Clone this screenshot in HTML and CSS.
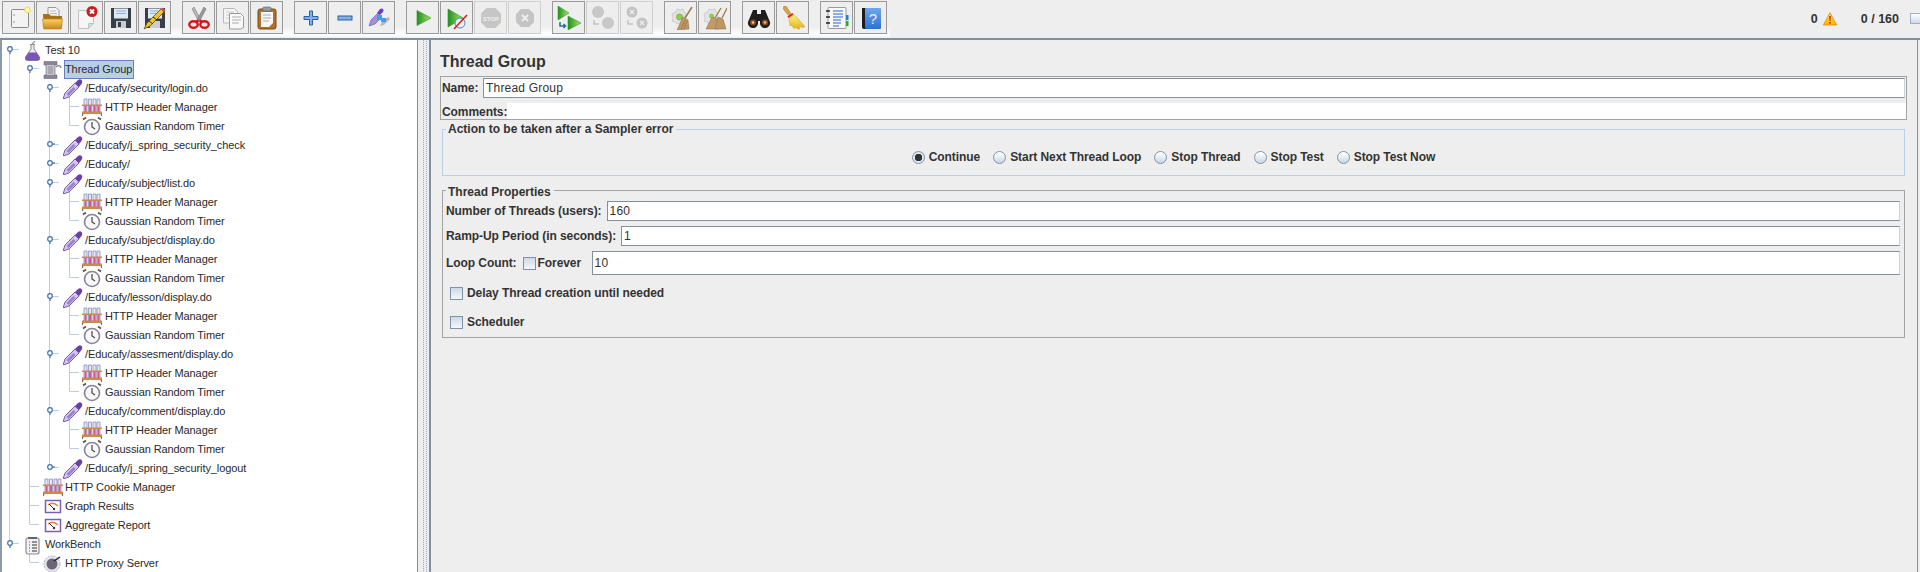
FILE: index.html
```html
<!DOCTYPE html>
<html lang="en">
<head>
<meta charset="utf-8">
<title>Apache JMeter - Thread Group</title>
<link rel="stylesheet" href="styles.css">
</head>
<body>
<svg class="defs" aria-hidden="true">
  <defs>
    <linearGradient id="gFolder" x1="0" y1="0" x2="0" y2="1"><stop offset="0" stop-color="#f8cf6a"/><stop offset="1" stop-color="#c98a17"/></linearGradient>
    <linearGradient id="gGreen" x1="0" y1="0" x2="1" y2="0"><stop offset="0" stop-color="#1f8f1f"/><stop offset="1" stop-color="#a9e66a"/></linearGradient>
    <linearGradient id="gBook" x1="0" y1="0" x2="0" y2="1"><stop offset="0" stop-color="#6fa8ee"/><stop offset="1" stop-color="#2f6fd0"/></linearGradient>
    <linearGradient id="gBroom" x1="0" y1="0" x2="0" y2="1"><stop offset="0" stop-color="#fff27a"/><stop offset="1" stop-color="#e0b21a"/></linearGradient>
    <linearGradient id="gWarn" x1="0" y1="0" x2="0" y2="1"><stop offset="0" stop-color="#ffe25a"/><stop offset="1" stop-color="#ffb300"/></linearGradient>

    <symbol id="i-new" viewBox="0 0 24 24"><rect x="4.500" y="3.500" width="17" height="18" rx="1" fill="#f3f3f3" stroke="#8a8a8a"/><circle cx="7" cy="9" r=".8" fill="#888"/><circle cx="7" cy="16" r=".8" fill="#888"/><circle cx="20.500" cy="4" r="2.800" fill="#fff6a8" stroke="#e9d85a"/></symbol>
    <symbol id="i-open" viewBox="0 0 24 24"><path d="M7 1.500h8l3 3v9H7z" fill="#f4f4f4" stroke="#999"/><path d="M9 5h6M9 7.500h7M9 10h7" stroke="#bbb"/><path d="M2 8h6l2 2h11v11.500q0 1-1 1H4q-1 0-1.300-1z" fill="#a87212"/><path d="M1.500 13h20l-1 9q0 1-1 1H3.500q-1 0-1-1z" fill="url(#gFolder)" stroke="#b67f17" stroke-width=".6"/></symbol>
    <symbol id="i-close" viewBox="0 0 24 24"><path d="M3.500 4.500h15v13l-5 5h-10z" fill="#f6f6f6" stroke="#c2c2c2"/><path d="M18.500 17.500h-5v5z" fill="#ddd" stroke="#c2c2c2"/><circle cx="17" cy="5.500" r="5.500" fill="#c9201f"/><path d="M15 3.500l4 4M19 3.500l-4 4" stroke="#fff" stroke-width="1.800"/></symbol>
    <symbol id="i-save" viewBox="0 0 24 24"><path d="M2 2h20v20H2z" fill="#3a3f45"/><rect x="5" y="2.500" width="14" height="10" fill="#dfe9f5"/><path d="M7 5h10M7 7.500h10" stroke="#8fb2d8"/><rect x="7" y="15" width="10" height="7" fill="#c9ccd0"/><rect x="9" y="16" width="3" height="5" fill="#3a3f45"/></symbol>
    <symbol id="i-saveas" viewBox="0 0 24 24"><path d="M2 2h20v20H2z" fill="#3a3f45"/><rect x="5" y="2.500" width="14" height="10" fill="#dfe9f5"/><path d="M7 5h8M7 7.500h6" stroke="#8fb2d8"/><rect x="7" y="15" width="10" height="7" fill="#c9ccd0"/><path d="M1 23l3-6L18 3l3 3L7 20z" fill="#f0c52c" stroke="#4a3a10" stroke-width=".7"/><path d="M6 15l4 3M10 11l4 3" stroke="#333"/><path d="M18 3l3 3 1.500-1.500-3-3z" fill="#d9534f"/></symbol>
    <symbol id="i-cut" viewBox="0 0 24 24"><path d="M7 1l7 13-2 2L5 3z" fill="#b6b6b6" stroke="#808080" stroke-width=".6"/><path d="M17 1l-7 13 2 2 7-13z" fill="#9a9a9a" stroke="#707070" stroke-width=".6"/><ellipse cx="6.500" cy="18.500" rx="4.200" ry="3.300" fill="none" stroke="#d01818" stroke-width="2.400"/><ellipse cx="17.500" cy="18.500" rx="4.200" ry="3.300" fill="none" stroke="#d01818" stroke-width="2.400"/><path d="M9 15.500l2.500-1M15 15.500l-2.500-1" stroke="#d01818" stroke-width="2"/></symbol>
    <symbol id="i-copy" viewBox="0 0 24 24"><path d="M2.500 2.500h11l3 3V17h-14z" fill="#f4f4f4" stroke="#b8b8b8"/><path d="M5 6h8M5 9h8M5 12h8" stroke="#ccc"/><path d="M8.500 7.500h11l3 3v11l-3 1.500h-11z" fill="#fafafa" stroke="#9a9a9a"/><path d="M11 11h9M11 14h9M11 17h7" stroke="#aaa"/></symbol>
    <symbol id="i-paste" viewBox="0 0 24 24"><rect x="3" y="3" width="18" height="20" rx="2" fill="#b2702a" stroke="#7b4a18"/><path d="M6 6h12v11l-4 4H6z" fill="#f8f8f8"/><path d="M8 9h8M8 12h8M8 15h6" stroke="#aaa"/><rect x="8" y="1" width="8" height="4" rx="1" fill="#9b9b9b" stroke="#666" stroke-width=".6"/></symbol>
    <symbol id="i-plus" viewBox="0 0 24 24"><path d="M10.500 5h3v5.500H19v3h-5.500V19h-3v-5.500H5v-3h5.500z" fill="#7fb0e8" stroke="#2f5f9f"/></symbol>
    <symbol id="i-minus" viewBox="0 0 24 24"><rect x="5" y="10" width="14" height="4" fill="#7fb0e8" stroke="#2f5f9f"/></symbol>
    <symbol id="i-toggle" viewBox="0 0 24 24"><path d="M2 20l2-6 7-7 4 4-7 7z" fill="#a38ed8" stroke="#7a5ec0" stroke-width=".7"/><path d="M10 7l3-4q2-1 3 0t0 3l-3 3z" fill="#6a3fc0"/><path d="M13 20l2-4 6-5 2 2-6 6z" fill="#b5b5b5"/><path d="M10 9h5v5h-5zM14 12h5v4h-5z" fill="#38a0ee"/></symbol>
    <symbol id="i-start" viewBox="0 0 24 24"><path d="M6 4.500L20 12 6 19.500z" fill="url(#gGreen)" stroke="#3f9a30" stroke-width=".7"/></symbol>
    <symbol id="i-startno" viewBox="0 0 24 24"><path d="M3 3l15 9-15 9z" fill="url(#gGreen)" stroke="#3f9a30" stroke-width=".7"/><circle cx="15" cy="17" r="5" fill="#e8f0f8" stroke="#5b86b5"/><path d="M9 23L22 9" stroke="#d81818" stroke-width="1.500"/></symbol>
    <symbol id="i-stop" viewBox="0 0 24 24"><path d="M7.500 2h9L22 7.500v9L16.500 22h-9L2 16.500v-9z" fill="#c6c6c6"/><text x="12" y="14.500" class="stoptext">STOP</text></symbol>
    <symbol id="i-shut" viewBox="0 0 24 24"><path d="M8 3h8l5 5v8l-5 5H8l-5-5V8z" fill="#c4c4c4"/><path d="M9 9l6 6M15 9l-6 6" stroke="#eee" stroke-width="2"/></symbol>
    <symbol id="i-rstart" viewBox="0 0 24 24"><path d="M1 0l11 7-11 7z" fill="url(#gGreen)" stroke="#3f9a30" stroke-width=".6"/><path d="M11 10l13 7-13 7z" fill="url(#gGreen)" stroke="#3f9a30" stroke-width=".6"/><path d="M3 16v4h5M6.500 18l2 2-2 2" fill="none" stroke="#1f6f8f" stroke-width="1.500"/></symbol>
    <symbol id="i-rstop" viewBox="0 0 24 24"><circle cx="7" cy="6" r="6" fill="#c8c8c8"/><circle cx="17" cy="17" r="6" fill="#c8c8c8"/><path d="M3 14v4h5" fill="none" stroke="#c4c4c4" stroke-width="1.500"/></symbol>
    <symbol id="i-rshut" viewBox="0 0 24 24"><circle cx="7" cy="6" r="5.500" fill="#c4c4c4"/><circle cx="17" cy="17" r="5.500" fill="#c4c4c4"/><path d="M3 14v4h5" fill="none" stroke="#c4c4c4" stroke-width="1.500"/><path d="M5 4l4 4M9 4l-4 4M15 15l4 4M19 15l-4 4" stroke="#eee" stroke-width="1.300"/></symbol>
    <symbol id="i-clear" viewBox="0 0 24 24"><path d="M4 7l3-1 1-3 3 1 3-1 1 3 2 1-1 3 1 3-2 2-1 3-3-1-3 1-2-2-3-1 1-3-1-3z" fill="#e2e2e2" stroke="#bbb" stroke-width=".6"/><circle cx="10.500" cy="11" r="3" fill="#8fd04a" stroke="#5f9f2a" stroke-width=".6"/><path d="M23 1l-7 11" stroke="#a07a45" stroke-width="1.500"/><path d="M14 11l5 3 1 9-12 1z" fill="#bf9765" stroke="#8a6a3e" stroke-width=".5"/><path d="M12 23l4-9M15 23l3-8" stroke="#8a6a3e" stroke-width=".6"/></symbol>
    <symbol id="i-clearall" viewBox="0 0 24 24"><path d="M2 7l3-1 1-3 3 1 3-1 1 3 2 1-1 3 1 3-2 2-1 3-3-1-3 1-2-2-3-1 1-3-1-3z" fill="#e4e4e4" stroke="#bbb" stroke-width=".6"/><circle cx="8.500" cy="10" r="2.500" fill="#8fd04a"/><path d="M18 2l-6 10M24 2l-5 10" stroke="#a07a45" stroke-width="1.300"/><path d="M9 11l5 2 2 10H3z" fill="#c29a68" stroke="#8a6a3e" stroke-width=".5"/><path d="M15 11l5 2 3 10H12z" fill="#bf9765" stroke="#8a6a3e" stroke-width=".5"/></symbol>
    <symbol id="i-bino" viewBox="0 0 24 24"><path d="M6 4h4v4h4V4h4l5 12a5 5 0 0 1-10 2v-3h-2v3a5 5 0 0 1-10-2z" fill="#1e1e1e"/><circle cx="6" cy="16.500" r="3" fill="#8a4a1a"/><circle cx="18" cy="16.500" r="3" fill="#8a4a1a"/><circle cx="6" cy="16.500" r="1.300" fill="#e9c08a"/><circle cx="18" cy="16.500" r="1.300" fill="#e9c08a"/></symbol>
    <symbol id="i-broom" viewBox="0 0 24 24"><path d="M3 0q3 0 4 3l3 5-2.500 1.500L3 4q-1.500-2 0-4z" fill="#d6a24a" stroke="#a77a2a" stroke-width=".5"/><path d="M6.500 10.500l5-3.500 1 1.500-5 3.500z" fill="#d81f26"/><path d="M8 12.500l5-4 11 12-2 1-3-1-1 3-3-2-2 1-2-3-2 0z" fill="url(#gBroom)" stroke="#c59a18" stroke-width=".5"/></symbol>
    <symbol id="i-func" viewBox="0 0 24 24"><rect x="3" y="1.500" width="18" height="21" rx="1" fill="#f8f8f8" stroke="#9a9a9a"/><path d="M1 5h4M1 11h4M1 17h4" stroke="#222" stroke-width="1.500"/><path d="M8 5h10M8 8h10M8 11h10M8 14h8M8 17h8M8 20h6" stroke="#2a63c8" stroke-width="1.200"/><rect x="21" y="9" width="2.500" height="5" fill="#2a7ad0"/><rect x="21" y="15" width="2.500" height="5" fill="#2ea82e"/></symbol>
    <symbol id="i-help" viewBox="0 0 24 24"><path d="M3 2h4v21H5q-2 0-2-2z" fill="#1d1d1d"/><rect x="6" y="2" width="16" height="21" rx="1" fill="url(#gBook)"/><text x="14" y="18" class="helptext">?</text></symbol>

    <symbol id="t-flask" viewBox="0 0 20 20"><path d="M7 3.500h5M8 3.500V8L2.500 16q-1 3.500 2 3.500h10q3 0 2-3.500L11 8V3.500" fill="#eceaf2" stroke="#8c8c8c"/><path d="M5.500 11.500h8l3 5q.5 3-2 3h-10q-2.500 0-2-3z" fill="#7a55b8"/><path d="M9 3l3-3" stroke="#999" stroke-width="1.200"/></symbol>
    <symbol id="t-spool" viewBox="0 0 20 20"><path d="M1 1.500h13V5h-2v10h2v3.500H1V15h2V5H1z" fill="#8b8396" stroke="#6e6878" stroke-width=".6"/><path d="M3.500 5h8v10h-8z" fill="#c9c4cf"/><path d="M5 7h5M5 9h5M5 11h5M5 13h5" stroke="#8f8a98"/><path d="M13 7q4-3 5 1" fill="none" stroke="#8b8396" stroke-width="1.300"/></symbol>
    <symbol id="t-pipette" viewBox="0 0 20 20"><path d="M0 20l2-6L12 4l4 4L6 18z" fill="#d3c6ec" stroke="#6a4ea5" stroke-width=".9"/><path d="M3.500 15l7-7 2 2-7 7z" fill="#9a80cf"/><path d="M12 4l4 4 2.500-3q1.500-2.500 0-4t-4 .5z" fill="#6a3fa8"/></symbol>
    <symbol id="t-rack" viewBox="0 0 20 20"><path d="M2 1h3v13q-1.500 2-3 0zM6.500 1h3v13q-1.500 2-3 0zM11 1h3v13q-1.500 2-3 0zM15 1h3v13q-1.500 2-3 0z" fill="#e4e6f4" stroke="#7884b8" stroke-width=".7"/><path d="M2.500 8h2v6h-2zM7 8h2v6H7zM11.500 8h2v6h-2zM15.500 8h2v6h-2z" fill="#d8588a"/><path d="M0 6.500h20V8H0zM0 13.500h20V16H0z" fill="#c98a4a"/><path d="M1 16l-1 2M19 16l1 2" stroke="#8a5a28" stroke-width="1.300"/></symbol>
    <symbol id="t-clock" viewBox="0 0 20 20"><circle cx="10" cy="10" r="7.500" fill="#f8f8f8" stroke="#8a8298" stroke-width="1.600"/><path d="M10 5v5l3 2" fill="none" stroke="#444" stroke-width="1.200"/><path d="M1 2.500l3-2M19 2.500l-3-2" stroke="#555" stroke-width="1.800"/></symbol>
    <symbol id="t-graph" viewBox="0 0 20 20"><rect x="2.500" y="3.500" width="15" height="12" fill="#fff" stroke="#7c5fb0" stroke-width="1.500"/><path d="M5 8q5-4 10 1" fill="none" stroke="#e8803a" stroke-width="1.400"/><path d="M6 7l5 5" stroke="#333"/><circle cx="11" cy="12" r="1.200" fill="#333"/></symbol>
    <symbol id="t-bench" viewBox="0 0 20 20"><rect x="3" y="3" width="13" height="16" rx="2" fill="#f2f0f4" stroke="#8f8a98" stroke-width="1.200"/><path d="M5 2h9v2H5z" fill="#666"/><path d="M9 7h5M9 10h5M9 13h5M9 16h5" stroke="#333"/><path d="M6 7h1M6 10h1M6 13h1" stroke="#4a4a4a"/><path d="M6 16h1" stroke="#3a9a3a"/></symbol>
    <symbol id="t-proxy" viewBox="0 0 20 20"><circle cx="9" cy="10" r="8" fill="#e8e4ee" stroke="#b9b3c4" stroke-dasharray="2 1"/><circle cx="9" cy="10" r="5.500" fill="#6b6578"/><path d="M11 7l6-4" stroke="#222" stroke-width="1.500"/></symbol>

    <symbol id="h-open" viewBox="0 0 10 10"><path d="M5 7v3" stroke="#3f6fb0" stroke-width="1.200"/><circle cx="5" cy="5" r="2.300" fill="#fff" stroke="#3f6fb0" stroke-width="1.200"/></symbol>
    <symbol id="h-closed" viewBox="0 0 10 10"><path d="M7 5h3" stroke="#3f6fb0" stroke-width="1.200"/><circle cx="5" cy="5" r="2.300" fill="#fff" stroke="#3f6fb0" stroke-width="1.200"/></symbol>
  </defs>
</svg>

<header class="topbar">
  <nav class="toolbar">
    <div class="tool-group">
      <button class="tool" type="button"><svg class="tool-icon"><use href="#i-new"/></svg></button>
      <button class="tool" type="button"><svg class="tool-icon"><use href="#i-open"/></svg></button>
      <button class="tool" type="button"><svg class="tool-icon"><use href="#i-close"/></svg></button>
      <button class="tool" type="button"><svg class="tool-icon"><use href="#i-save"/></svg></button>
      <button class="tool" type="button"><svg class="tool-icon"><use href="#i-saveas"/></svg></button>
    </div>
    <div class="tool-group">
      <button class="tool" type="button"><svg class="tool-icon"><use href="#i-cut"/></svg></button>
      <button class="tool" type="button"><svg class="tool-icon"><use href="#i-copy"/></svg></button>
      <button class="tool" type="button"><svg class="tool-icon"><use href="#i-paste"/></svg></button>
    </div>
    <div class="tool-group">
      <button class="tool" type="button"><svg class="tool-icon"><use href="#i-plus"/></svg></button>
      <button class="tool" type="button"><svg class="tool-icon"><use href="#i-minus"/></svg></button>
      <button class="tool" type="button"><svg class="tool-icon"><use href="#i-toggle"/></svg></button>
    </div>
    <div class="tool-group">
      <button class="tool" type="button"><svg class="tool-icon"><use href="#i-start"/></svg></button>
      <button class="tool" type="button"><svg class="tool-icon"><use href="#i-startno"/></svg></button>
      <button class="tool off" type="button"><svg class="tool-icon"><use href="#i-stop"/></svg></button>
      <button class="tool off" type="button"><svg class="tool-icon"><use href="#i-shut"/></svg></button>
    </div>
    <div class="tool-group">
      <button class="tool" type="button"><svg class="tool-icon"><use href="#i-rstart"/></svg></button>
      <button class="tool off" type="button"><svg class="tool-icon"><use href="#i-rstop"/></svg></button>
      <button class="tool off" type="button"><svg class="tool-icon"><use href="#i-rshut"/></svg></button>
    </div>
    <div class="tool-group">
      <button class="tool" type="button"><svg class="tool-icon"><use href="#i-clear"/></svg></button>
      <button class="tool" type="button"><svg class="tool-icon"><use href="#i-clearall"/></svg></button>
    </div>
    <div class="tool-group">
      <button class="tool" type="button"><svg class="tool-icon"><use href="#i-bino"/></svg></button>
      <button class="tool" type="button"><svg class="tool-icon"><use href="#i-broom"/></svg></button>
    </div>
    <div class="tool-group">
      <button class="tool" type="button"><svg class="tool-icon"><use href="#i-func"/></svg></button>
      <button class="tool" type="button"><svg class="tool-icon"><use href="#i-help"/></svg></button>
    </div>
  </nav>
  <div class="status">
    <span class="status-errors">0</span>
    <svg class="warn" viewBox="0 0 14 14"><path d="M7 .7L13.600 13H.4z" fill="url(#gWarn)" stroke="#e08a00" stroke-width=".8"/><path d="M6.200 4h1.600l-.3 5h-1zM6.200 10h1.600v1.600H6.200z" fill="#b3261e"/></svg>
    <span class="status-count">0 / 160</span>
    <span class="status-box"></span>
  </div>
</header>

<main class="workspace">
  <aside class="tree">
    <svg class="tree-lines" viewBox="0 0 100 532">
      <path class="tree-path" d="M9.500 9.500V503.500M29.500 28.500V484.500M29.500 503.500V522.500M49.500 47.500V427.500M10 9.500H19M10 503.500H19M30 28.500H39M30 446.500H39M30 465.500H39M30 484.500H39M30 522.500H39M50 47.500H59M50 104.500H59M50 123.500H59M50 142.500H59M50 199.500H59M50 256.500H59M50 313.500H59M50 370.500H59M50 427.500H59M69.500 47.500V85.500H79M69.500 66.500H79M69.500 142.500V180.500H79M69.500 161.500H79M69.500 199.500V237.500H79M69.500 218.500H79M69.500 256.500V294.500H79M69.500 275.500H79M69.500 313.500V351.500H79M69.500 332.500H79M69.500 370.500V408.500H79M69.500 389.500H79"/>
      <use href="#h-open" x="5" y="4" width="10" height="10"/>
      <use href="#h-open" x="25" y="23" width="10" height="10"/>
      <use href="#h-open" x="45" y="42" width="10" height="10"/>
      <use href="#h-closed" x="45" y="99" width="10" height="10"/>
      <use href="#h-closed" x="45" y="118" width="10" height="10"/>
      <use href="#h-open" x="45" y="137" width="10" height="10"/>
      <use href="#h-open" x="45" y="194" width="10" height="10"/>
      <use href="#h-open" x="45" y="251" width="10" height="10"/>
      <use href="#h-open" x="45" y="308" width="10" height="10"/>
      <use href="#h-open" x="45" y="365" width="10" height="10"/>
      <use href="#h-closed" x="45" y="422" width="10" height="10"/>
      <use href="#h-open" x="5" y="498" width="10" height="10"/>
    </svg>
    <ul class="tree-list">
      <li class="node l0"><svg class="node-icon"><use href="#t-flask"/></svg><span class="node-label">Test 10</span></li>
      <li class="node l1"><svg class="node-icon"><use href="#t-spool"/></svg><span class="node-label selected">Thread Group</span></li>
      <li class="node l2"><svg class="node-icon"><use href="#t-pipette"/></svg><span class="node-label">/Educafy/security/login.do</span></li>
      <li class="node l3"><svg class="node-icon"><use href="#t-rack"/></svg><span class="node-label">HTTP Header Manager</span></li>
      <li class="node l3"><svg class="node-icon"><use href="#t-clock"/></svg><span class="node-label">Gaussian Random Timer</span></li>
      <li class="node l2"><svg class="node-icon"><use href="#t-pipette"/></svg><span class="node-label">/Educafy/j_spring_security_check</span></li>
      <li class="node l2"><svg class="node-icon"><use href="#t-pipette"/></svg><span class="node-label">/Educafy/</span></li>
      <li class="node l2"><svg class="node-icon"><use href="#t-pipette"/></svg><span class="node-label">/Educafy/subject/list.do</span></li>
      <li class="node l3"><svg class="node-icon"><use href="#t-rack"/></svg><span class="node-label">HTTP Header Manager</span></li>
      <li class="node l3"><svg class="node-icon"><use href="#t-clock"/></svg><span class="node-label">Gaussian Random Timer</span></li>
      <li class="node l2"><svg class="node-icon"><use href="#t-pipette"/></svg><span class="node-label">/Educafy/subject/display.do</span></li>
      <li class="node l3"><svg class="node-icon"><use href="#t-rack"/></svg><span class="node-label">HTTP Header Manager</span></li>
      <li class="node l3"><svg class="node-icon"><use href="#t-clock"/></svg><span class="node-label">Gaussian Random Timer</span></li>
      <li class="node l2"><svg class="node-icon"><use href="#t-pipette"/></svg><span class="node-label">/Educafy/lesson/display.do</span></li>
      <li class="node l3"><svg class="node-icon"><use href="#t-rack"/></svg><span class="node-label">HTTP Header Manager</span></li>
      <li class="node l3"><svg class="node-icon"><use href="#t-clock"/></svg><span class="node-label">Gaussian Random Timer</span></li>
      <li class="node l2"><svg class="node-icon"><use href="#t-pipette"/></svg><span class="node-label">/Educafy/assesment/display.do</span></li>
      <li class="node l3"><svg class="node-icon"><use href="#t-rack"/></svg><span class="node-label">HTTP Header Manager</span></li>
      <li class="node l3"><svg class="node-icon"><use href="#t-clock"/></svg><span class="node-label">Gaussian Random Timer</span></li>
      <li class="node l2"><svg class="node-icon"><use href="#t-pipette"/></svg><span class="node-label">/Educafy/comment/display.do</span></li>
      <li class="node l3"><svg class="node-icon"><use href="#t-rack"/></svg><span class="node-label">HTTP Header Manager</span></li>
      <li class="node l3"><svg class="node-icon"><use href="#t-clock"/></svg><span class="node-label">Gaussian Random Timer</span></li>
      <li class="node l2"><svg class="node-icon"><use href="#t-pipette"/></svg><span class="node-label">/Educafy/j_spring_security_logout</span></li>
      <li class="node l1"><svg class="node-icon"><use href="#t-rack"/></svg><span class="node-label">HTTP Cookie Manager</span></li>
      <li class="node l1"><svg class="node-icon"><use href="#t-graph"/></svg><span class="node-label">Graph Results</span></li>
      <li class="node l1"><svg class="node-icon"><use href="#t-graph"/></svg><span class="node-label">Aggregate Report</span></li>
      <li class="node l0"><svg class="node-icon"><use href="#t-bench"/></svg><span class="node-label">WorkBench</span></li>
      <li class="node l1"><svg class="node-icon"><use href="#t-proxy"/></svg><span class="node-label">HTTP Proxy Server</span></li>
    </ul>
  </aside>
  <div class="splitter"></div>
  <section class="panel">
    <h1 class="panel-title">Thread Group</h1>
    <div class="name-box">
      <div class="name-row">
        <label class="label name-label">Name:</label>
        <div class="field">Thread Group</div>
      </div>
      <div class="comment-row">
        <label class="label comment-label">Comments:</label>
        <div class="comment-area"></div>
      </div>
    </div>
    <fieldset class="group action">
      <legend class="legend">Action to be taken after a Sampler error</legend>
      <div class="radios">
        <label class="choice"><input class="radio on" type="radio" name="err" checked><span class="label">Continue</span></label>
        <label class="choice"><input class="radio" type="radio" name="err"><span class="label">Start Next Thread Loop</span></label>
        <label class="choice"><input class="radio" type="radio" name="err"><span class="label">Stop Thread</span></label>
        <label class="choice"><input class="radio" type="radio" name="err"><span class="label">Stop Test</span></label>
        <label class="choice"><input class="radio" type="radio" name="err"><span class="label">Stop Test Now</span></label>
      </div>
    </fieldset>
    <fieldset class="group props">
      <legend class="legend legend-props">Thread Properties</legend>
      <div class="prop-row">
        <label class="label">Number of Threads (users):</label>
        <div class="field">160</div>
      </div>
      <div class="prop-row">
        <label class="label">Ramp-Up Period (in seconds):</label>
        <div class="field">1</div>
      </div>
      <div class="prop-row loop-row">
        <label class="label">Loop Count:</label>
        <label class="check-label forever"><input class="check" type="checkbox"><span class="label">Forever</span></label>
        <div class="field">10</div>
      </div>
      <label class="check-label option"><input class="check" type="checkbox"><span class="label">Delay Thread creation until needed</span></label>
      <label class="check-label option"><input class="check" type="checkbox"><span class="label">Scheduler</span></label>
    </fieldset>
  </section>
</main>
</body>
</html>
```
FILE: styles.css
```css
* { box-sizing: border-box; }

html, body {
  margin: 0;
  padding: 0;
  width: 1920px;
  height: 572px;
  overflow: hidden;
  background: #eeeeee;
  color: #333333;
  font-family: "Liberation Sans", Arial, sans-serif;
  font-size: 12px;
}

.defs {
  position: absolute;
  width: 0;
  height: 0;
}

.stoptext {
  font: bold 6px "Liberation Sans", sans-serif;
  fill: #eeeeee;
  text-anchor: middle;
}

.helptext {
  font: 15px "Liberation Sans", sans-serif;
  fill: #e8f0ff;
  text-anchor: middle;
}

/* top bar */
.topbar {
  display: flex;
  justify-content: space-between;
  height: 40px;
  border-bottom: 2px solid #7f909f;
}

.toolbar {
  display: flex;
  gap: 11px;
  width: 890px;
  height: 38px;
  padding: 1px 0 0 2px;
  background: linear-gradient(#eeeeee 70%, #ffffff 92%, #eeeeee 100%);
}

.tool-group {
  display: flex;
  gap: 1px;
}

.tool {
  display: flex;
  align-items: center;
  justify-content: center;
  width: 33px;
  height: 33px;
  padding: 0;
  background: #eeeeee;
  border: 1px solid #9a9a9a;
  border-radius: 0;
}

.tool.off {
  border-color: #cfcfcf;
}

.tool-icon {
  width: 24px;
  height: 24px;
}

.status {
  display: flex;
  align-items: center;
  height: 38px;
  font-weight: bold;
  color: #333333;
  font-size: 12.5px;
}

.status-errors {
  margin-right: 5px;
}

.warn {
  width: 14px;
  height: 14px;
  margin-right: 24px;
}

.status-box {
  width: 10px;
  height: 11px;
  margin-left: 11px;
  border: 1px solid #9db0c5;
  border-right: 0;
  background: linear-gradient(#ffffff, #ccd9e8);
  align-self: center;
  margin-top: -1px;
}

/* workspace */
.workspace {
  display: flex;
  height: 532px;
}

.tree {
  position: relative;
  flex: none;
  width: 418px;
  height: 532px;
  padding-top: 1px;
  background: #ffffff;
  border-left: 2px solid #8a9aa8;
  border-right: 1px solid #7f909f;
  overflow: hidden;
}

.tree-lines {
  position: absolute;
  left: -2px;
  top: 0;
  width: 100px;
  height: 532px;
}

.tree-path {
  fill: none;
  stroke: #b8cfe5;
  stroke-width: 1;
}

.tree-list {
  position: relative;
  list-style: none;
  margin: 0;
  padding: 0;
}

.node {
  display: flex;
  align-items: center;
  height: 19px;
  color: #2a2a2a;
  font-size: 11px;
  letter-spacing: -0.1px;
  white-space: nowrap;
}

.l0 { padding-left: 21px; }
.l1 { padding-left: 41px; }
.l2 { padding-left: 61px; }
.l3 { padding-left: 80px; }

.node-icon {
  flex: none;
  width: 20px;
  height: 20px;
  overflow: visible;
}

.node-label {
  margin-left: 1px;
  padding: 0 1px 0 0;
  line-height: 17px;
  border: 1px solid transparent;
}

.l3 .node-label {
  margin-left: 2px;
}

.node-label.selected {
  background: #b8cfe5;
  border-color: #6382bf;
  height: 19px;
}

.splitter {
  flex: none;
  width: 11px;
  height: 532px;
  background:
    linear-gradient(#a0a8b0 50%, transparent 50%) 5px 0 / 1px 2px repeat-y,
    linear-gradient(#a0a8b0 50%, transparent 50%) 8px 1px / 1px 2px repeat-y;
}

.panel {
  flex: none;
  display: flex;
  flex-direction: column;
  width: 1489px;
  height: 532px;
  padding: 0 10px 0 9px;
  border-left: 2px solid #7f909f;
  border-right: 1px solid #7f909f;
}

.panel-title {
  margin: 0;
  height: 36px;
  padding-top: 12px;
  font-size: 16px;
  line-height: 20px;
  font-weight: bold;
  color: #333333;
}

.name-box {
  display: flex;
  flex-direction: column;
  height: 44px;
  border: 1px solid #a3a3a3;
}

.name-row {
  display: flex;
  align-items: center;
  height: 25px;
  padding: 1px 1px 4px 1px;
}

.name-label {
  width: 41px;
}

.comment-row {
  display: flex;
  align-items: center;
  height: 17px;
  padding-left: 1px;
}

.comment-label {
  width: 65px;
  margin-top: 3px;
}

.comment-area {
  flex: 1;
  height: 16px;
  background: #ffffff;
}

.label {
  font-weight: bold;
  color: #333333;
  letter-spacing: -0.07px;
  white-space: nowrap;
}

.field {
  flex: 1;
  height: 100%;
  padding-left: 2px;
  display: flex;
  align-items: center;
  background: #ffffff;
  border: 1px solid #7f909f;
  border-right-color: #c8d0d8;
  color: #333333;
  letter-spacing: 0.2px;
}

.group {
  margin: 2px 2px 0 2px;
  padding: 0;
  min-width: 0;
}

.action {
  flex: none;
  height: 54px;
  width: 1463px;
  border: 1px solid #b8cfe5;
}

.legend {
  margin-left: 3px;
  padding: 0 3px 0 2px;
  font-weight: bold;
  line-height: 14px;
  height: 14px;
  color: #333333;
}

.radios {
  display: flex;
  justify-content: center;
  padding-top: 14px;
  gap: 13px;
}

.choice {
  display: flex;
  align-items: center;
  gap: 4px;
}

.radio,
.check {
  appearance: none;
  margin: 0;
  flex: none;
  width: 13px;
  height: 13px;
  border: 1px solid #7f93a8;
  background: linear-gradient(#ffffff 10%, #ccd9e8 90%);
}

.check {
  background: linear-gradient(#ccd9e8, #f4f7fb);
}

.radio {
  border-radius: 50%;
}

.radio.on {
  background: radial-gradient(circle, #333333 0 3.5px, #dfe7f0 4px);
}

.props {
  flex: none;
  height: 155px;
  width: 1463px;
  margin-top: 7px;
  display: flex;
  flex-direction: column;
  padding: 4px 4px 0 3px;
  border: 1px solid #a3a3a3;
}

.legend-props {
  margin-left: 0;
  line-height: 18px;
}

.prop-row {
  display: flex;
  align-items: center;
  flex: none;
  height: 20px;
  margin-bottom: 5px;
  gap: 5px;
}

.loop-row {
  height: 24px;
  margin-bottom: 9px;
}

.check-label {
  display: flex;
  align-items: center;
  gap: 2px;
}

.forever {
  margin-left: 1px;
  width: 64px;
}

.option {
  flex: none;
  height: 18px;
  gap: 4px;
  margin: 0 0 11px 4px;
}
```
